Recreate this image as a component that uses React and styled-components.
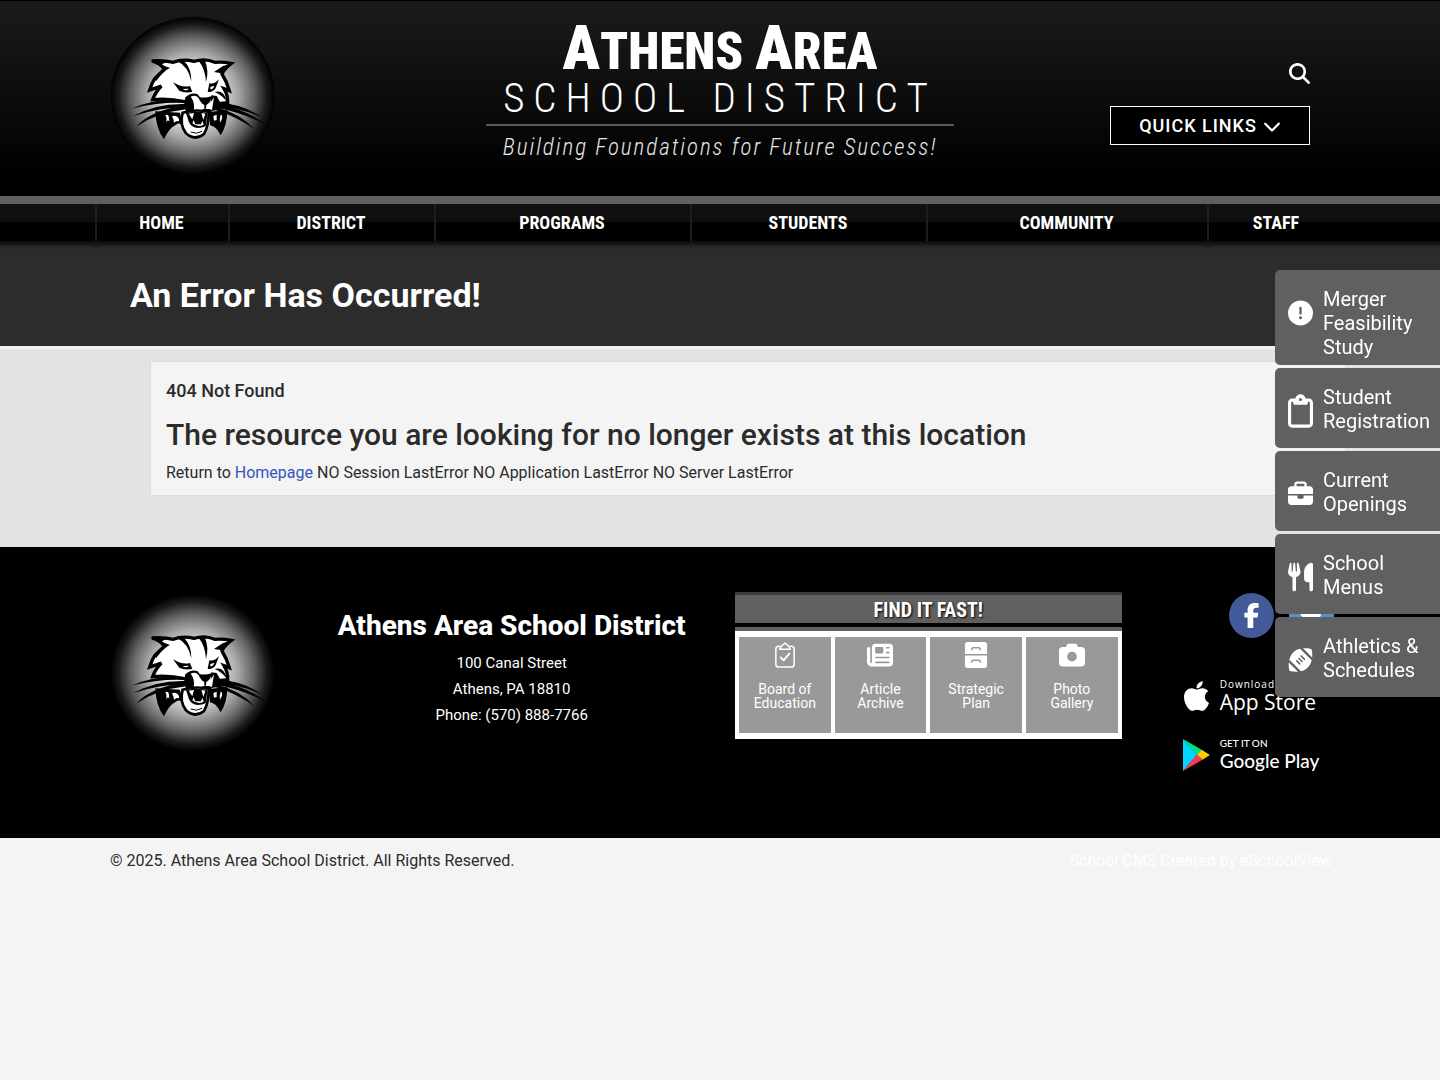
import React from "react";
import styled, { createGlobalStyle } from "styled-components";
import {
  FaMagnifyingGlass,
  FaChevronDown,
  FaCircleExclamation,
  FaRegClipboard,
  FaBriefcase,
  FaUtensils,
  FaFootball,
  FaNewspaper,
  FaCamera,
  FaFacebookF,
  FaTwitter,
  FaApple,
} from "react-icons/fa6";

const condensed = `"Roboto Condensed", Roboto, sans-serif`;

const GlobalStyle = createGlobalStyle`
  * {
    box-sizing: border-box;
  }
  body {
    margin: 0;
    background: #f4f4f4;
    color: #2b2b2b;
    font-family: Roboto, sans-serif;
    font-size: 16px;
    line-height: 24px;
  }
  h1, h2, h3, h4, p, ul {
    margin: 0;
    padding: 0;
  }
  ul {
    list-style: none;
  }
  a {
    color: inherit;
    text-decoration: none;
  }
`;

const Container = styled.div`
  max-width: 1250px;
  margin: 0 auto;
`;

const Header = styled.header`
  background: linear-gradient(#1b1b1b, #000 90%);
  border-top: 1px solid #000;
`;
const HeaderRow = styled(Container)`
  display: grid;
  grid-template-columns: 1fr 468px 1fr;
  align-items: start;
  min-height: 195px;
  padding: 14px 15px 0;
`;
const Logo = styled.svg`
  display: block;
  width: 165px;
  height: 160px;
`;
const Brand = styled.a`
  display: block;
  padding-top: 12px;
  color: white;
  text-align: center;
  font-family: ${condensed};
`;
const BrandName = styled.span`
  display: block;
  font-size: 51px;
  font-weight: 900;
  line-height: 42px;
  text-transform: uppercase;
  white-space: nowrap;
`;
const BigLetter = styled.span`
  font-size: 62px;
`;
const BrandSub = styled.span`
  display: block;
  border-bottom: 2px solid #5b5b5b;
  font-size: 41px;
  font-weight: 300;
  line-height: 51px;
  letter-spacing: 9px;
  white-space: nowrap;
`;
const Tagline = styled.span`
  display: block;
  padding-top: 8px;
  color: #e6e6e6;
  font-size: 23px;
  font-style: italic;
  font-weight: 300;
  line-height: 28px;
  letter-spacing: 2px;
  white-space: nowrap;
`;
const HeaderTools = styled.div`
  display: flex;
  flex-direction: column;
  align-items: flex-end;
  gap: 22px;
  padding: 48px 20px 0 0;
`;
const SearchButton = styled.button`
  display: flex;
  padding: 0;
  border: 0;
  background: none;
  color: white;
  font-size: 21px;
`;
const QuickLinks = styled.button`
  display: flex;
  align-items: center;
  justify-content: center;
  gap: 6px;
  width: 200px;
  height: 39px;
  border: 1px solid white;
  background: black;
  color: white;
  font-family: Roboto, sans-serif;
  font-size: 18px;
  font-weight: 500;
  letter-spacing: 1px;
`;

const Nav = styled.nav`
  position: relative;
  border-top: 8px solid #606060;
  background: linear-gradient(#111 0, #0d0d0d 50%, #000 50%);
  box-shadow: 0 2px 4px 2px rgba(0, 0, 0, 0.7);
`;
const NavList = styled.ul`
  display: grid;
  grid-template-columns: 133fr 206fr 256fr 236fr 281fr 138fr;
  max-width: 1250px;
  margin: 0 auto;
`;
const NavLink = styled.a`
  display: block;
  padding-right: 2px;
  border-left: 2px solid #1d1d1d;
  color: white;
  font-family: ${condensed};
  font-size: 18px;
  font-weight: 700;
  line-height: 37px;
  text-align: center;
`;

const TitleBand = styled.div`
  background: #2c2c2c;
`;
const PageTitle = styled.h1`
  max-width: 1250px;
  margin: 0 auto;
  padding: 32px 35px 29px;
  color: white;
  font-size: 34px;
  font-weight: 700;
  line-height: 44px;
`;
const Main = styled.main`
  padding: 13px 0 52px;
  border-top: 3px solid #f0f0f0;
  background: #e3e3e3;
`;
const ContentWrap = styled(Container)`
  padding-left: 56px;
`;
const Panel = styled.section`
  padding: 16px 15px 10px;
  background: #f4f4f4;
  box-shadow: 0 0 2px rgba(0, 0, 0, 0.08);
`;
const ErrorCode = styled.h4`
  font-size: 18px;
  font-weight: 500;
  line-height: 26px;
`;
const ErrorText = styled.h2`
  padding: 12px 0 7px;
  font-size: 30px;
  font-weight: 500;
  line-height: 38px;
`;
const HomeLink = styled.a`
  color: #3355c0;
`;

const Footer = styled.footer`
  padding: 45px 0 44px;
  background: black;
  color: white;
`;
const FooterRow = styled(Container)`
  display: grid;
  grid-template-columns: 2fr 4fr 4fr 2fr;
`;
const FooterCol = styled.div`
  min-width: 0;
  padding: 0 15px;
`;
const Address = styled.address`
  padding: 16px 15px 0;
  font-size: 15px;
  font-style: normal;
  line-height: 26px;
  text-align: center;
`;
const FooterName = styled.h2`
  margin-bottom: 6px;
  font-size: 28px;
  font-weight: 800;
  line-height: 36px;
  white-space: nowrap;
`;
const FastTitle = styled.h3`
  padding-top: 2px;
  border-top: 3px solid #3b3b3b;
  background: #606060;
  font-family: ${condensed};
  font-size: 20px;
  font-weight: 700;
  line-height: 26px;
  text-align: center;
  text-shadow: 1px 1px 2px black;
`;
const FastList = styled.ul`
  display: grid;
  grid-template-columns: repeat(4, 1fr);
  gap: 4px;
  margin-top: 4px;
  padding: 6px 4px;
  border-top: 4px solid #606060;
  background: white;
`;
const FastLink = styled.a`
  display: flex;
  flex-direction: column;
  align-items: center;
  gap: 14px;
  height: 96px;
  padding-top: 5px;
  background: #999;
  color: white;
  font-size: 14px;
  line-height: 14px;
  text-align: center;
  svg {
    width: 26px;
    height: 26px;
  }
`;
const AppsCol = styled(FooterCol)`
  padding: 1px 11px 0 15px;
`;
const Social = styled.div`
  display: flex;
  justify-content: flex-end;
  gap: 15px;
  margin-bottom: 38px;
`;
const SocialLink = styled.a`
  display: flex;
  align-items: center;
  justify-content: center;
  width: 45px;
  height: 45px;
  border-radius: 50%;
  background: ${(props) => props.$color};
  font-size: 25px;
`;
const StoreLink = styled.a`
  display: flex;
  align-items: center;
  gap: 9px;
  height: 40px;
  margin: 0 0 19px 30px;
  white-space: nowrap;
  svg {
    flex: none;
    width: 29px;
    height: 34px;
  }
`;
const StoreText = styled.span`
  display: flex;
  flex-direction: column;
  font-family: ${(props) => props.$font};
  font-size: ${(props) => props.$size};
  font-weight: 500;
  line-height: 24px;
  small {
    font-size: 10px;
    line-height: 12px;
    letter-spacing: ${(props) => props.$track};
  }
`;
const Legal = styled(Container)`
  display: flex;
  justify-content: space-between;
  padding: 11px 13px 10px 15px;
`;
const CmsLink = styled.a`
  color: white;
`;

const SideTabs = styled.ul`
  position: fixed;
  top: 270px;
  right: 0;
  display: flex;
  flex-direction: column;
  gap: 3px;
  width: 165px;
`;
const SideTab = styled.a`
  display: flex;
  gap: 10px;
  min-height: 80px;
  padding: 17px 0 6px 13px;
  border-radius: 5px 0 0 5px;
  background: #606060;
  color: white;
  font-size: 20px;
  line-height: 24px;
`;
const TabIcon = styled.span`
  display: flex;
  align-items: center;
  flex: none;
  height: 51px;
  svg {
    width: 25px;
    height: 34px;
  }
`;

function WildcatLogo({ id }) {
  return (
    <Logo viewBox="30 45 495 480" role="img" aria-label="Athens Wildcat">
      <defs>
        <radialGradient id={id}>
          <stop offset="0" stopColor="#fff" />
          <stop offset="0.3" stopColor="#e8e8e8" />
          <stop offset="0.55" stopColor="#a8a8a8" />
          <stop offset="0.75" stopColor="#606060" />
          <stop offset="0.9" stopColor="#1c1c1c" />
          <stop offset="1" stopColor="#000" />
        </radialGradient>
      </defs>
      <ellipse cx="278" cy="287" rx="246" ry="236" fill={`url(#${id})`} />
      {/* cheek tufts */}
      <path d="M166 334 L240 338 L248 376 Q238 366 228 374 Q206 384 192 418 Q168 388 166 334Z M382 330 L326 336 L330 376 Q348 378 362 406 Q382 376 382 330Z" />
      <path
        fill="#fff"
        d="M196 346 Q202 342 206 348 L208 364 Q202 358 198 368 Q202 354 196 346Z M216 350 Q222 344 232 350 Q240 358 236 364 Q230 360 222 368 Q222 356 216 350Z M362 344 Q368 344 366 356 L360 368 Q358 356 362 344Z M340 348 L350 344 L350 360 L342 362Z"
      />
      {/* head */}
      <path
        fill="#fff"
        stroke="#000"
        strokeWidth="10"
        d="M156 183 Q190 180 220 187 Q248 175 282 184 Q316 174 344 187 Q370 185 394 190 Q374 204 366 222 Q380 244 388 272 L372 266 Q384 286 383 308 L345 312 L330 332 L262 332 L258 306 Q206 294 158 299 Q166 276 184 258 L149 270 Q156 248 164 236 Q178 222 194 207 Q180 190 156 183Z"
      />
      <path d="M148 179 L206 185 Q188 189 184 194 L210 204 Q190 212 168 244 L166 238 L188 209 Q172 186 148 179Z M402 187 L368 199 L342 216 L364 220 L374 240 L386 266 L366 222Z" />
      <path d="M232 184 Q264 198 274 244 Q275 206 252 182Z M294 180 Q316 206 318 246 Q328 212 314 180Z" />
      {/* eyes */}
      <path d="M219 247 Q246 264 270 258 L277 276 Q252 280 238 272 Q230 262 219 247Z M357 238 Q343 254 328 250 L323 276 Q338 276 346 266Z" />
      <path fill="#fff" d="M248 267 L266 266 Q260 275 248 267Z M331 261 L343 257 Q340 268 331 268Z" />
      <path d="M344 276 Q372 268 380 304 Q364 284 344 276Z" />
      {/* muzzle */}
      <path d="M256 292 Q272 276 292 282 L300 292 L296 334 L278 334 L252 320Z M334 286 L350 288 L362 310 L352 330 L330 334Z" />
      <path
        fill="#fff"
        d="M272 290 Q290 282 298 298 Q304 316 314 324 L302 332 L281 332 Q286 308 272 290Z M342 292 L336 330 L319 324 Q330 312 342 292Z"
      />
      <path d="M296 290 Q314 296 336 288 Q332 308 319 315 L318 326 L313 326 L313 315 Q300 308 296 290Z" />
      {/* jaw */}
      <path
        fill="#fff"
        stroke="#000"
        strokeWidth="8"
        d="M248 338 Q290 326 326 336 Q326 380 312 402 Q284 424 258 400 Q238 374 248 338Z"
      />
      <path d="M258 339 Q290 332 322 339 L318 376 Q312 384 292 384 Q272 382 266 364Z" />
      <path
        fill="#fff"
        d="M266 341 L282 339 L277 358Z M304 339 L316 341 L310 360Z M277 370 L281 361 L286 373 L303 373 L307 362 L311 374 Q294 384 277 370Z"
      />
      <path fill="none" stroke="#000" strokeWidth="3" d="M272 396 Q290 404 306 394" />
      {/* whiskers */}
      <path d="M262 300 Q170 292 95 326 Q180 304 262 309Z M262 312 Q170 308 98 349 Q178 322 262 321Z M256 318 Q160 326 108 380 Q170 338 258 328Z M344 306 Q430 312 486 352 Q420 324 344 316Z M350 314 Q440 326 496 374 Q430 338 350 323Z M348 322 Q420 340 464 388 Q410 350 348 331Z" />
    </Logo>
  );
}

const BoardIcon = () => (
  <svg viewBox="0 0 27 27" fill="none" stroke="currentColor" strokeWidth="1.600" strokeLinejoin="round" strokeLinecap="round">
    <path d="M8 4.500H7A3 3 0 0 0 4 7.500v15.500a3 3 0 0 0 3 3h13a3 3 0 0 0 3-3V7.500a3 3 0 0 0-3-3h-1" />
    <path d="M8 7.500 9.500 4.500 13.500 1l4 3.500 1.500 3z" />
    <path strokeWidth="2" d="m9 16 3 3 6-7" />
  </svg>
);

const CabinetIcon = () => (
  <svg viewBox="0 0 27 27">
    <path
      fill="currentColor"
      d="M5 0h17a3 3 0 0 1 3 3v9.500H2V3a3 3 0 0 1 3-3zM2 14h23v10a3 3 0 0 1-3 3H5a3 3 0 0 1-3-3z"
    />
    <path fill="none" stroke="#999" strokeWidth="1.500" strokeLinecap="round" d="M9 8q0-2 2-2h5q2 0 2 2M9 21q0-2 2-2h5q2 0 2 2" />
  </svg>
);

const PlayIcon = () => (
  <svg viewBox="0 0 29 32">
    <path fill="#00d4ff" d="M1 0v32l14-16z" />
    <path fill="#00e07a" d="M1 0l20 11.500-6 5z" />
    <path fill="#ffce00" d="M20 11l8 5-8 5-5-5z" />
    <path fill="#f43b50" d="M1 32l20-11.500-6-5z" />
  </svg>
);

const navItems = ["HOME", "DISTRICT", "PROGRAMS", "STUDENTS", "COMMUNITY", "STAFF"];

const fastItems = [
  { icon: <BoardIcon />, lines: ["Board of", "Education"] },
  { icon: <FaNewspaper />, lines: ["Article", "Archive"] },
  { icon: <CabinetIcon />, lines: ["Strategic", "Plan"] },
  { icon: <FaCamera />, lines: ["Photo", "Gallery"] },
];

const sideItems = [
  { icon: <FaCircleExclamation />, text: "Merger Feasibility Study" },
  { icon: <FaRegClipboard />, text: "Student Registration" },
  { icon: <FaBriefcase />, text: "Current Openings" },
  { icon: <FaUtensils />, text: "School Menus" },
  { icon: <FaFootball />, text: "Athletics & Schedules" },
];

const App = () => {
  return (
    <>
      <GlobalStyle />
      <Header>
        <HeaderRow>
          <WildcatLogo id="header-glow" />
          <Brand href="#home">
            <BrandName>
              <BigLetter>A</BigLetter>thens <BigLetter>A</BigLetter>rea
            </BrandName>
            <BrandSub>SCHOOL DISTRICT</BrandSub>
            <Tagline>Building Foundations for Future Success!</Tagline>
          </Brand>
          <HeaderTools>
            <SearchButton type="button" aria-label="Search">
              <FaMagnifyingGlass />
            </SearchButton>
            <QuickLinks type="button">
              QUICK LINKS <FaChevronDown />
            </QuickLinks>
          </HeaderTools>
        </HeaderRow>
      </Header>
      <Nav>
        <NavList>
          {navItems.map((item) => (
            <li key={item}>
              <NavLink href={`#${item.toLowerCase()}`}>{item}</NavLink>
            </li>
          ))}
        </NavList>
      </Nav>
      <TitleBand>
        <PageTitle>An Error Has Occurred!</PageTitle>
      </TitleBand>
      <Main>
        <ContentWrap>
          <Panel>
            <ErrorCode>404 Not Found</ErrorCode>
            <ErrorText>
              The resource you are looking for no longer exists at this location
            </ErrorText>
            <p>
              Return to <HomeLink href="#home">Homepage</HomeLink> NO Session
              LastError NO Application LastError NO Server LastError
            </p>
          </Panel>
        </ContentWrap>
      </Main>
      <Footer>
        <FooterRow>
          <FooterCol>
            <WildcatLogo id="footer-glow" />
          </FooterCol>
          <Address>
            <FooterName>Athens Area School District</FooterName>
            <p>100 Canal Street</p>
            <p>Athens, PA 18810</p>
            <p>Phone: (570) 888-7766</p>
          </Address>
          <FooterCol>
            <FastTitle>FIND IT FAST!</FastTitle>
            <FastList>
              {fastItems.map(({ icon, lines }) => (
                <li key={lines[0]}>
                  <FastLink href="#fast">
                    {icon}
                    <span>
                      {lines[0]}
                      <br />
                      {lines[1]}
                    </span>
                  </FastLink>
                </li>
              ))}
            </FastList>
          </FooterCol>
          <AppsCol>
            <Social>
              <SocialLink href="#facebook" aria-label="Facebook" $color="#435a98">
                <FaFacebookF />
              </SocialLink>
              <SocialLink href="#twitter" aria-label="Twitter" $color="#4a95d6">
                <FaTwitter />
              </SocialLink>
            </Social>
            <StoreLink href="#app-store">
              <FaApple />
              <StoreText $font={`"Open Sans", sans-serif`} $size="21px" $track="1px">
                <small>Download on the</small>
                App Store
              </StoreText>
            </StoreLink>
            <StoreLink href="#google-play">
              <PlayIcon />
              <StoreText $font="Lato, sans-serif" $size="19px" $track="0">
                <small>GET IT ON</small>
                Google Play
              </StoreText>
            </StoreLink>
          </AppsCol>
        </FooterRow>
      </Footer>
      <Legal>
        <span>© 2025. Athens Area School District. All Rights Reserved.</span>
        <CmsLink href="#cms">School CMS Created by eSchoolView</CmsLink>
      </Legal>
      <SideTabs>
        {sideItems.map(({ icon, text }) => (
          <li key={text}>
            <SideTab href="#tab">
              <TabIcon>{icon}</TabIcon>
              <span>{text}</span>
            </SideTab>
          </li>
        ))}
      </SideTabs>
    </>
  );
};

export default App;
